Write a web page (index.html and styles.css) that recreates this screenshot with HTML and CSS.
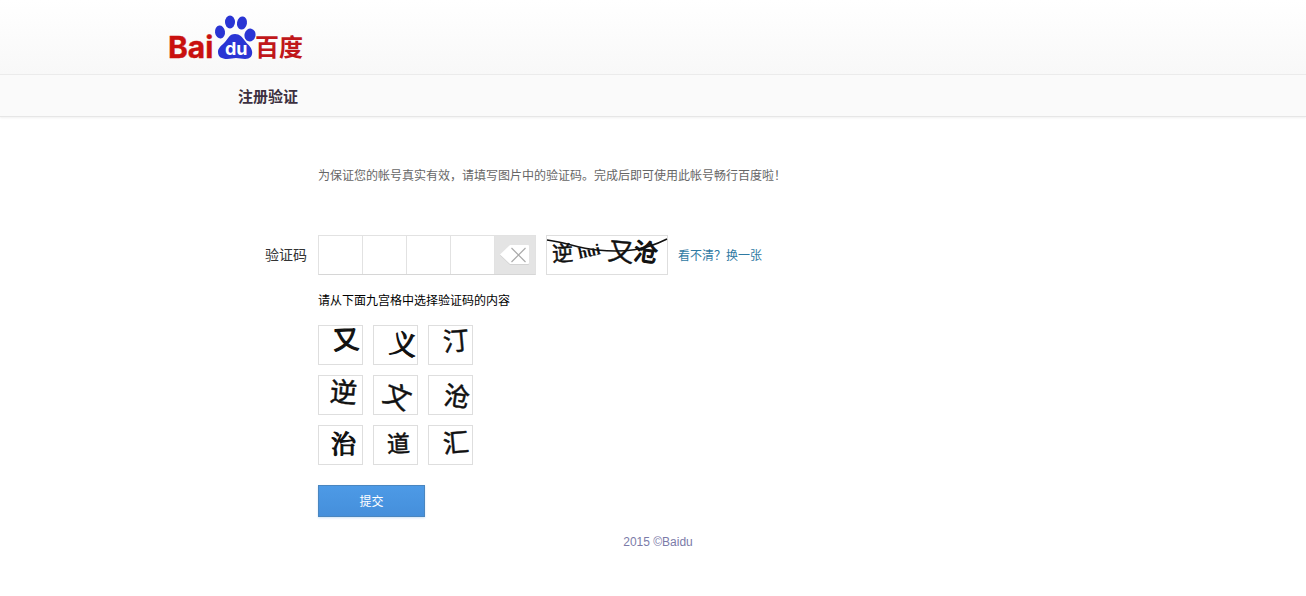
FILE: index.html
```html
<!DOCTYPE html>
<html lang="zh-CN">
<head>
<meta charset="utf-8">
<meta name="viewport" content="width=device-width, initial-scale=1">
<title>注册验证</title>
<link rel="stylesheet" href="styles.css">
</head>
<body>
<header class="header">
  <div class="wrap">
    <a class="logo" href="#" aria-label="Baidu百度">
      <svg class="logo-art" width="138" height="48" viewBox="0 0 138 48">
        <text class="logo-latin" x="0" y="44">Bai</text>
        <g class="logo-paw">
          <ellipse cx="52" cy="18" rx="5" ry="6.500" transform="rotate(-8 52 18)"/>
          <ellipse cx="62" cy="8" rx="5" ry="6.500"/>
          <ellipse cx="74" cy="9" rx="5" ry="6.500" transform="rotate(10 74 9)"/>
          <ellipse cx="82" cy="21" rx="5.500" ry="6.500" transform="rotate(12 82 21)"/>
          <path d="M67 20C61 20 60 25 57 28C53 32 50 34 50 38C50 43 54 45 59 45C63 45 65 44 68 44C71 44 74 45 77 45C82 45 85 42 84 37C83 32 79 30 77 27C74 23 72 20 67 20Z"/>
        </g>
        <text class="logo-du" x="57" y="41">du</text>
        <text class="logo-han" x="87" y="42">百度</text>
      </svg>
    </a>
  </div>
</header>
<div class="titlebar">
  <div class="wrap"><h1 class="title">注册验证</h1></div>
</div>
<main class="wrap">
  <form class="form">
    <p class="intro">为保证您的帐号真实有效，请填写图片中的验证码。完成后即可使用此帐号畅行百度啦！</p>
    <div class="code-row">
      <label class="code-label" for="code1">验证码</label>
      <div class="code-box">
        <input class="code-cell" id="code1" type="text" maxlength="1" readonly>
        <input class="code-cell" type="text" maxlength="1" aria-label="第二个字" readonly>
        <input class="code-cell" type="text" maxlength="1" aria-label="第三个字" readonly>
        <input class="code-cell" type="text" maxlength="1" aria-label="第四个字" readonly>
        <button class="backspace" type="button" aria-label="删除">
          <svg width="32" height="22" viewBox="0 0 32 22">
            <path class="key-shade" d="M1 11.500L11 2H29Q30 2 30 3V20Q30 21 29 21H11Z"/>
            <path class="key-face" d="M1 10.500L11 1H29Q30 1 30 2V19Q30 20 29 20H11Z"/>
            <path class="key-cross" d="M12.500 4L26.500 18M26.500 4L12.500 18"/>
          </svg>
        </button>
      </div>
      <div class="code-image">
        <svg width="120" height="38" viewBox="0 0 120 38">
          <text class="ink" font-size="21" x="5" y="25" transform="rotate(-3 15 16)">逆</text>
          <text class="ink-serif" font-size="16" x="31" y="21" transform="rotate(-12 40 16)">hui</text>
          <text class="ink" font-size="26" x="61" y="25" transform="rotate(6 73 16)">又</text>
          <text class="ink ink-thick" font-size="24" x="87" y="25" transform="rotate(8 99 15)">沧</text>
          <path class="ink-line" d="M0 4C18 6 30 12 50 14C78 17 98 14 120 3"/>
        </svg>
      </div>
      <a class="refresh" href="#">看不清？换一张</a>
    </div>
    <p class="hint">请从下面九宫格中选择验证码的内容</p>
    <div class="grid">
      <button class="key" type="button"><svg width="43" height="38"><text class="ink ink-thick" font-size="26" x="14" y="23" transform="rotate(-3 27 13)">又</text></svg></button>
      <button class="key" type="button"><svg width="43" height="38"><text class="ink-brush" font-size="27" x="16" y="28" transform="rotate(8 30 18)">义</text></svg></button>
      <button class="key" type="button"><svg width="43" height="38"><text class="ink" font-size="26" x="14" y="24" transform="rotate(-5 28 15)">汀</text></svg></button>
      <button class="key" type="button"><svg width="43" height="38"><text class="ink" font-size="27" x="11" y="26" transform="rotate(5 25 17)">逆</text></svg></button>
      <button class="key" type="button"><svg width="43" height="38"><text class="ink" font-size="27" x="10" y="30" transform="rotate(22 23 20)">文</text></svg></button>
      <button class="key" type="button"><svg width="43" height="38"><text class="ink" font-size="26" x="15" y="30" transform="rotate(8 29 20)">沧</text></svg></button>
      <button class="key" type="button"><svg width="43" height="38"><text class="ink-brush" font-size="25" x="12" y="27">治</text></svg></button>
      <button class="key" type="button"><svg width="43" height="38"><text class="ink" font-size="23" x="13" y="26" transform="rotate(-2 25 17)">道</text></svg></button>
      <button class="key" type="button"><svg width="43" height="38"><text class="ink" font-size="26" x="14" y="26" transform="rotate(-5 28 17)">汇</text></svg></button>
    </div>
    <button class="submit" type="submit">提交</button>
  </form>
</main>
<footer class="footer">2015 ©Baidu</footer>
</body>
</html>
```
FILE: styles.css
```css
* { box-sizing: border-box; }
body {
  margin: 0;
  background: #fff;
  font: 12px/20px "Liberation Sans", "Noto Sans CJK SC", sans-serif;
  color: #000;
}
h1, p { margin: 0; }
button, input { font: inherit; padding: 0; margin: 0; border-radius: 0; }
button { cursor: pointer; }
svg { display: block; overflow: visible; }
.wrap { max-width: 980px; margin: 0 auto; }

.header {
  border-bottom: 1px solid #ebebeb;
  background: linear-gradient(#fff, #f8f8f8);
}
.logo { display: inline-block; vertical-align: top; padding: 14px 0 12px 5px; }
.logo-latin { font: bold 30px Inter, sans-serif; fill: #c9100f; stroke: #c9100f; stroke-width: 0.4; }
.logo-han { font: bold 24px "Noto Sans CJK SC", sans-serif; fill: #c0171a; }
.logo-du { font: bold 18px Inter, sans-serif; fill: #fff; }
.logo-paw { fill: #2a35d4; }

.titlebar {
  border-bottom: 1px solid #e6e6e6;
  background: #fafafa;
  box-shadow: 0 1px 2px #f0f0f0;
}
.title {
  padding: 12px 0 9px 75px;
  font-size: 15px;
  line-height: 20px;
  color: #3c3040;
}

.form { padding: 49px 0 0 155px; }
.intro { color: #666; }
.code-row { display: flex; align-items: center; margin: 49px 0 16px -53px; }
.code-label { width: 53px; font-size: 14px; color: #333; }
.code-box {
  display: flex;
  border: 1px solid #e2e2e2;
  border-bottom-color: #d6d6d6;
  margin-right: 10px;
}
.code-cell {
  width: 44px;
  height: 38px;
  border: 0;
  border-right: 1px solid #e2e2e2;
  background: #fff;
  text-align: center;
}
.backspace {
  display: grid;
  place-items: center;
  width: 40px;
  border: 0;
  background: #e4e4e4;
}
.key-shade { fill: #d2d2d2; }
.key-face { fill: #fff; }
.key-cross { fill: none; stroke: #aaa; stroke-width: 1.2; }
.code-image { border: 1px solid #dedede; margin-right: 10px; }
.refresh { padding-top: 2px; color: #2f7aa3; text-decoration: none; }

.ink {
  font-family: "Noto Sans CJK SC", sans-serif;
  fill: #111;
  stroke: #111;
  stroke-width: 0.5;
  stroke-linejoin: round;
}
.ink-thick { stroke-width: 1.2; }
.ink-brush {
  font-family: "Noto Serif CJK SC", "Noto Sans CJK SC", serif;
  fill: #111;
  stroke: #111;
  stroke-width: 1.2;
}
.ink-serif { font-family: "Liberation Serif", serif; font-weight: bold; fill: #111; }
.ink-line { fill: none; stroke: #111; stroke-width: 1.5; }

.grid {
  display: grid;
  grid-template-columns: repeat(3, 45px);
  gap: 10px;
  margin: 14px 0 20px;
}
.key { border: 1px solid #dedede; background: #fff; }
.submit {
  display: block;
  width: 107px;
  height: 32px;
  padding-top: 2px;
  border: 1px solid #4a86bf;
  background: linear-gradient(#4d9ae6, #458fdb);
  box-shadow: 0 1px 2px #cfe4f7;
  color: #fff;
}
.footer { padding: 15px 0 20px 10px; text-align: center; color: #7b7ba8; }
```
